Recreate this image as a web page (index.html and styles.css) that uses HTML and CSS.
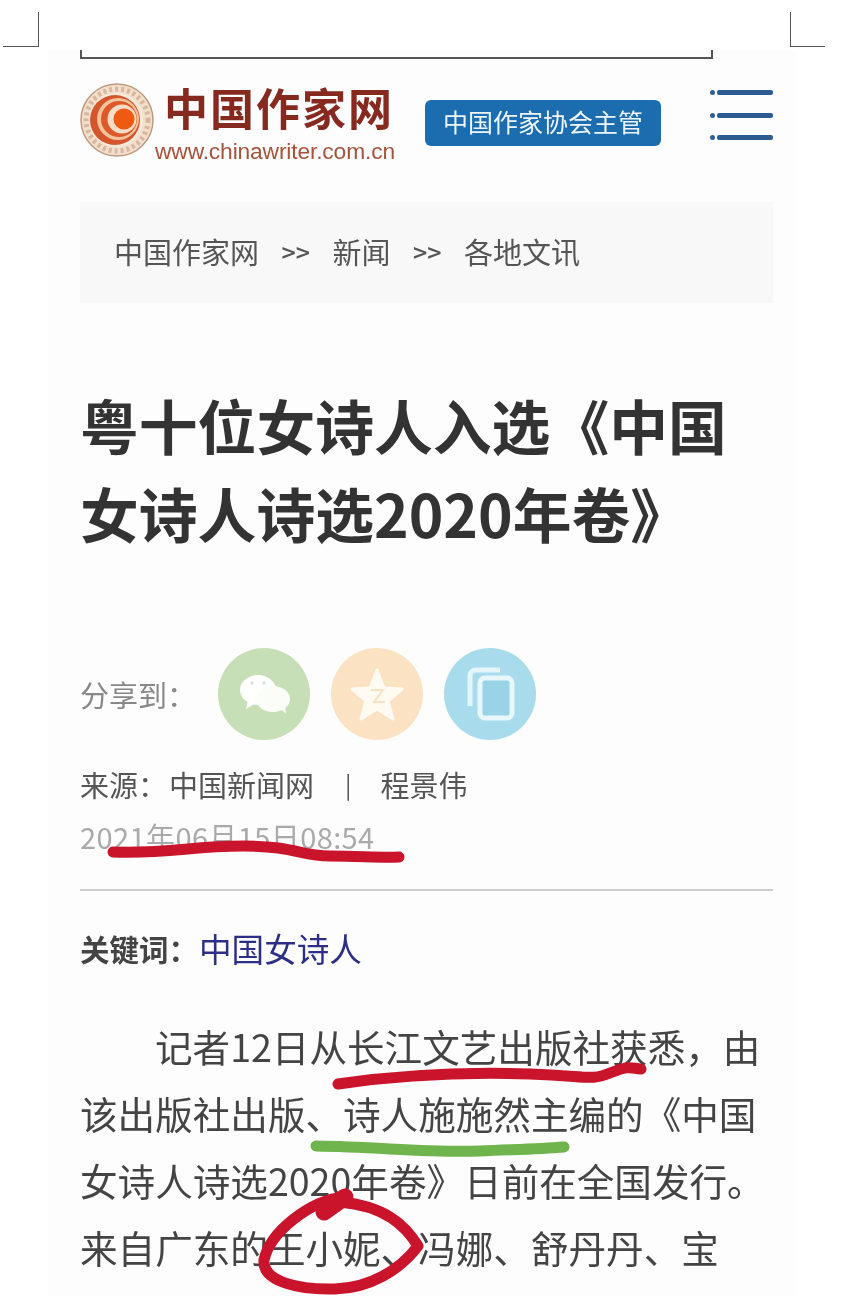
FILE: index.html
```html
<!DOCTYPE html>
<html lang="zh-CN">
<head>
<meta charset="utf-8">
<title>粤十位女诗人入选《中国女诗人诗选2020年卷》</title>
<link rel="stylesheet" href="styles.css">
</head>
<body>
<div class="page">
  <div class="marks"><span class="mark mark-left"></span><span class="mark mark-right"></span></div>
  <div class="sheet">
    <div class="bracket"></div>
    <header class="top">
      <div class="logo">
        <svg class="seal" viewBox="0 0 74 74" aria-hidden="true">
          <circle cx="37" cy="37" r="36" fill="#f3dfcd" stroke="#bf9a80" stroke-width="1.500"/>
          <circle cx="37" cy="37" r="31" fill="none" stroke="#d8b79e" stroke-width="5" stroke-dasharray="3 3"/>
          <circle cx="36" cy="37" r="27" fill="#fbeadb"/>
          <circle cx="35" cy="37" r="25" fill="#d4562c"/>
          <circle cx="38" cy="36" r="21" fill="#f6c49c"/>
          <circle cx="39" cy="36" r="18" fill="#dc5a2a"/>
          <circle cx="42" cy="36" r="14.500" fill="#f9dcc4"/>
          <circle cx="44" cy="36" r="10.500" fill="#ee5a12"/>
        </svg>
        <div class="logo-text">
          <div class="logo-cn">中国作家网</div>
          <div class="logo-url">www.chinawriter.com.cn</div>
        </div>
      </div>
      <div class="badge">中国作家协会主管</div>
      <div class="menu" aria-hidden="true">
        <div class="menu-row"><i class="menu-dot"></i><i class="menu-line"></i></div>
        <div class="menu-row"><i class="menu-dot"></i><i class="menu-line"></i></div>
        <div class="menu-row"><i class="menu-dot"></i><i class="menu-line"></i></div>
      </div>
    </header>
    <nav class="crumbs"><span>中国作家网</span><span class="sep">&gt;&gt;</span><span>新闻</span><span class="sep">&gt;&gt;</span><span>各地文讯</span></nav>
    <h1 class="title">粤十位女诗人入选《中国女诗人诗选2020年卷》</h1>
    <div class="share">
      <span class="share-label">分享到&#xFF1A;</span>
      <span class="share-btn share-green">
        <svg viewBox="0 0 92 92" class="share-ico" aria-hidden="true">
          <ellipse cx="40" cy="42" rx="18" ry="15" fill="#fff"/>
          <path d="M30 52l-2 9 10-6z" fill="#fff"/>
          <ellipse cx="55" cy="51" rx="17" ry="13" fill="#fbfdf9"/>
          <path d="M62 60l6 6-1-9z" fill="#fbfdf9"/>
          <circle cx="34" cy="35" r="1.800" fill="#d8dfe6"/><circle cx="46" cy="35" r="1.800" fill="#d8dfe6"/>
        </svg>
      </span>
      <span class="share-btn share-orange">
        <svg viewBox="0 0 92 92" class="share-ico" aria-hidden="true">
          <path d="M46 22l7 18 18 1-14 12 5 18-16-10-16 10 5-18-14-12 18-1z" fill="#fffaf2" stroke="#fffaf2" stroke-width="3" stroke-linejoin="round"/>
          <path d="M40 42h12l-9 12h11" fill="none" stroke="#f8e2c4" stroke-width="2"/>
        </svg>
      </span>
      <span class="share-btn share-blue">
        <svg viewBox="0 0 92 92" class="share-ico" aria-hidden="true">
          <path d="M56 22H32a6 6 0 0 0-6 6v30" fill="none" stroke="#e4f5fa" stroke-width="5"/>
          <rect x="36" y="30" width="32" height="40" rx="5" fill="#98d3e6" stroke="#e8f7fb" stroke-width="5"/>
        </svg>
      </span>
    </div>
    <div class="source"><span>来源&#xFF1A;</span><span>中国新闻网</span><span class="pipe">|</span><span>程景伟</span></div>
    <div class="date">2021年06月15日08:54</div>
    <div class="keywords"><b>关键词&#xFF1A;</b><a class="kw">中国女诗人</a></div>
    <p class="body-text">记者12日从长江文艺出版社获悉&#xFF0C;由该出版社出版、诗人施施然主编的《中国女诗人诗选2020年卷》日前在全国发行。来自广东的王小妮、冯娜、舒丹丹、宝</p>
  </div>
  <svg class="ink" viewBox="0 0 844 1296" aria-hidden="true">
    <path class="red" d="M113 852C170 854 190 846 243 846S300 856 330 856 380 858 399 857"/>
    <path class="red" d="M338 1084C400 1075 470 1072 530 1074S590 1081 610 1073 630 1068 641 1069"/>
    <path class="green" d="M316 1146C380 1147 430 1153 480 1151S540 1149 564 1147"/>
    <path class="red" d="M345 1197C310 1200 270 1232 264 1260 262 1282 300 1290 335 1289 370 1288 400 1270 418 1246 405 1225 385 1206 340 1202"/>
    <path class="red-blob" d="M324 1212L345 1197"/>
  </svg>
</div>
</body>
</html>
```
FILE: styles.css
```css
* { box-sizing: border-box; }
html, body { margin: 0; padding: 0; background: #fff; }
body { font-family: "Noto Sans CJK SC", "Noto Sans", sans-serif; color: #444; }
.page { position: relative; width: 844px; height: 1296px; overflow: hidden; }

.marks { display: flex; justify-content: space-between; padding: 12px 19px 0 3px; }
.mark { display: block; width: 36px; height: 35px; border-bottom: 1px solid #555; }
.mark-left { border-right: 1px solid #555; }
.mark-right { border-left: 1px solid #555; width: 35px; }

.sheet { margin: 3px 47px 0 48px; padding: 0 24px 0 32px; height: 1250px; background: #fdfdfd; filter: blur(.7px); overflow: hidden; }

.bracket { width: 633px; height: 9px; border: 2px solid #555; border-top: 0; }

.top { display: flex; align-items: flex-start; height: 143px; padding-top: 19px; }
.logo { display: flex; width: 345px; }
.seal { width: 74px; height: 74px; margin-top: 5px; flex: none; }
.logo-text { display: flex; flex-direction: column; margin-left: 1px; }
.logo-cn { font-size: 44px; line-height: 58px; letter-spacing: 2px; font-weight: 700; color: #862a20; padding-left: 9px; white-space: nowrap; }
.logo-url { margin-top: 1px; font-family: "Liberation Sans", sans-serif; font-size: 22.800px; line-height: 28px; color: #a5533a; letter-spacing: -.15px; white-space: nowrap; }
.badge { width: 236px; height: 46px; margin-top: 22px; border-radius: 6px; background: #1c6db0; color: #eef6fb; font-size: 25px; line-height: 43px; text-align: center; white-space: nowrap; }
.menu { display: flex; flex-direction: column; gap: 17.500px; margin: 12px 0 0 49px; }
.menu-row { display: flex; align-items: center; gap: 2px; height: 5px; }
.menu-dot { width: 5px; height: 5px; border-radius: 50%; background: #2f5f93; }
.menu-line { width: 56px; height: 5px; border-radius: 2px; background: #2d5c90; }

.crumbs { display: flex; align-items: center; height: 101px; padding: 0 0 3px 34px; background: #f8f8f8; font-size: 29px; color: #555; white-space: nowrap; }
.sep { margin: 0 22.500px; font-size: 25px; font-weight: 500; }

.title { margin: 78px 0 0; font-size: 58.800px; line-height: 88px; font-weight: 700; color: #333; }

.share { display: flex; align-items: center; margin-top: 91px; gap: 21px; }
.share-label { width: 117px; font-size: 29px; color: #888; white-space: nowrap; }
.share-btn { width: 92px; height: 92px; border-radius: 50%; display: block; flex: none; }
.share-ico { display: block; width: 92px; height: 92px; }
.share-green { background: #c6dfb6; }
.share-orange { background: #fae2c3; }
.share-blue { background: #a8dcec; }

.source { display: flex; margin-top: 22px; font-size: 29px; line-height: 44px; color: #555; white-space: nowrap; }
.source span:first-child { width: 89px; }
.pipe { margin: 0 29px 0 31px; font-size: 24px; }

.date { margin-top: 10px; padding-bottom: 33px; border-bottom: 2px solid #ccc; font-size: 29px; line-height: 40px; color: #aaa; letter-spacing: .4px; white-space: nowrap; }

.keywords { display: flex; margin-top: 35px; line-height: 44px; white-space: nowrap; }
.keywords b { width: 119px; font-size: 29.500px; font-weight: 700; color: #444; }
.kw { font-size: 32.600px; color: #2d2f86; }

.body-text { margin: 42px 0 0; font-size: 37.600px; line-height: 67px; text-indent: 75px; color: #444; }

.ink { position: absolute; left: 0; top: 0; width: 844px; height: 1296px; pointer-events: none; fill: none; stroke-linecap: round; stroke-linejoin: round; }
.red { stroke: #c9142c; stroke-width: 11; }
.green { stroke: #6fb44c; stroke-width: 11; }
.red-blob { stroke: #c9142c; stroke-width: 17; }
```
